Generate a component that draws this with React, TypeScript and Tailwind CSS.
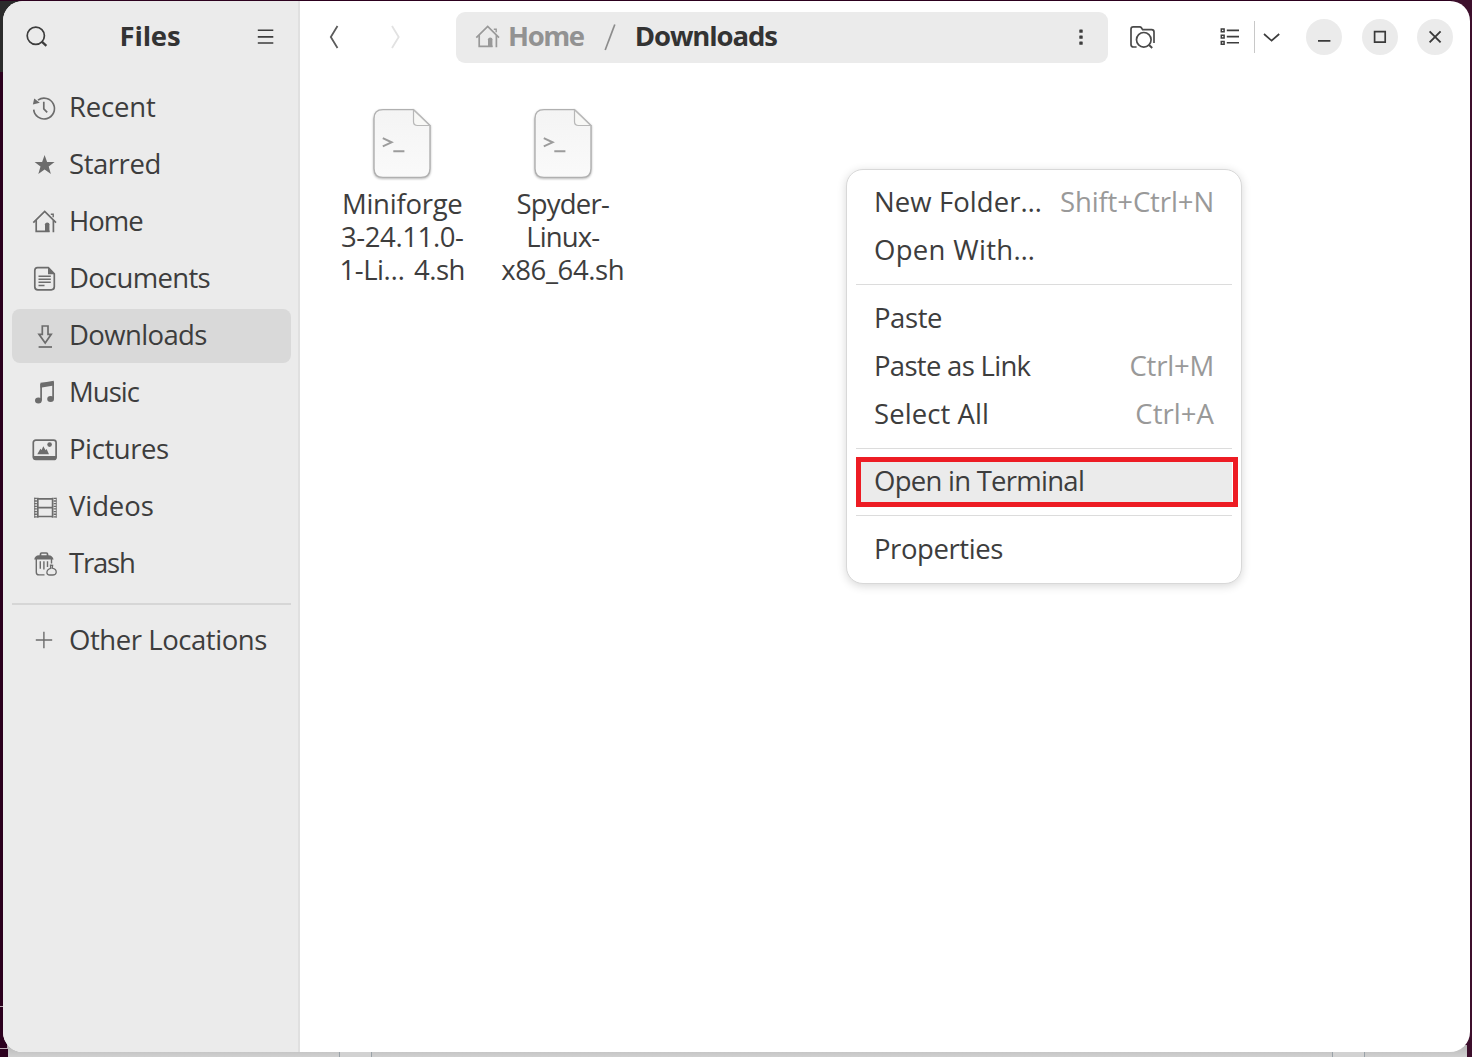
import type { ReactNode } from 'react';

type IconProps = { className?: string };

function Icon({ children, className = 'text-[#6c6c6c]' }: { children: ReactNode; className?: string }) {
  return (
    <svg width="28" height="28" viewBox="0 0 28 28" fill="none" stroke="currentColor" strokeWidth="1.7" className={`shrink-0 ${className}`}>
      {children}
    </svg>
  );
}

const RecentIcon = () => (
  <Icon>
    <path d="M8 6.1A10.4 10.4 0 1 1 3.7 15.6" />
    <path d="M2.9 10.6 4.2 4.4 9.8 8.8Z" fill="currentColor" stroke="none" />
    <path d="M13.8 7.8V14.8L17.2 18.4" />
  </Icon>
);

const StarIcon = () => (
  <Icon>
    <path d="M14.6 4 17.1 11H24.6L18.7 15.5 20.9 23 14.6 18.6 8.3 23 10.5 15.5 4.6 11H12.1Z" fill="currentColor" stroke="none" />
  </Icon>
);

const HomeIcon = ({ className }: IconProps) => (
  <Icon className={className}>
    <path d="M3.3 14.6 14.7 3.4 26 14.6" />
    <path d="M6.2 12V23.4H19.6M23.4 12.3V24.2" />
    <path d="M15 24V16.2Q15 14.4 17.2 14.4 19.4 14.4 19.4 16.2V24Z" fill="currentColor" stroke="none" />
    <path d="M20.8 6.3H23.2V9.2" strokeWidth="1.4" />
  </Icon>
);

const DocumentIcon = () => (
  <Icon>
    <path d="M7.5 2.7H18.3L24.3 8.8V21.8Q24.3 24.8 21.3 24.8H7.8Q4.8 24.8 4.8 21.8V5.5Q4.8 2.7 7.5 2.7Z" />
    <path d="M18 2.6V9.2H24.6Z" fill="currentColor" stroke="none" />
    <path d="M8.5 11.2H20.8M8.5 14.3H20.8M8.5 17.3H20.8M8.5 20.4H14.5" strokeWidth="1.5" />
  </Icon>
);

const DownloadIcon = () => (
  <Icon>
    <path d="M12.3 4H18V12.3H21.2L15.2 21 9 12.3H12.3Z" />
    <path d="M8.6 25H22" />
  </Icon>
);

const MusicIcon = () => (
  <Icon>
    <path d="M10.4 3.7Q16 3.4 23.8 1.8V6.6L10.4 8.8Z" fill="currentColor" stroke="none" />
    <path d="M11.1 5V21.5M23.1 3V19.8" />
    <ellipse cx="8.4" cy="21.6" rx="3.4" ry="3" fill="currentColor" stroke="none" />
    <ellipse cx="20.6" cy="20" rx="3.4" ry="3" fill="currentColor" stroke="none" />
  </Icon>
);

const PictureIcon = () => (
  <Icon>
    <rect x="3.3" y="4.1" width="22.8" height="19.4" rx="2.5" />
    <path d="M3 20H26.4V21.7Q26.4 24 24 24H5.4Q3 24 3 21.7Z" fill="currentColor" stroke="none" />
    <path d="M7.3 18.3 10.4 12.7 11.6 13.9 13.3 10.2 15.6 14.2 16.6 13 19 18.3Z" fill="currentColor" stroke="none" />
    <circle cx="19.6" cy="8.6" r="2.3" fill="currentColor" stroke="none" />
  </Icon>
);

const VideoIcon = () => (
  <Icon>
    <path d="M7.8 4.7V24.8M22.6 4.7V24.8M7.8 5.9H22.6M7.8 14.6H22.6M7.8 23.5H22.6" />
    <path d="M5.6 4.7V24.8M24.9 4.7V24.8" strokeWidth="2.6" strokeDasharray="1.3 1.35" />
    <path d="M4.7 4.7V24.8M26.3 4.7V24.8" strokeWidth="0.9" />
  </Icon>
);

const TrashIcon = () => (
  <Icon>
    <path d="M10.5 6V4.1Q10.5 3 11.6 3H16.4Q17.5 3 17.5 4.1V6" />
    <path d="M4.2 9.4Q4.8 5.5 9 5.3H18.6Q22.6 5.5 23.6 9.4Z" fill="currentColor" stroke="none" />
    <path d="M6.3 9V22.2Q6.3 24.9 9 24.9H14.5M21.5 9V13.5" strokeWidth="1.4" />
    <path d="M10.3 11.2V18.8M13.9 11.2V19.6M17.5 11.2V17" strokeWidth="1.4" />
    <path d="M20.5 15.2 22.6 15.3 22.2 18.2C25 18.7 26.4 20.6 26.2 22.5 26 24.3 24.5 25 22.6 25H19.8C17.8 25 16.8 23.9 16.9 22.3 17 20.3 18.5 18.8 20.6 18.3Z" strokeWidth="1.3" />
  </Icon>
);

const PlusIcon = () => (
  <Icon>
    <path d="M5.8 14H22.2M13.9 5.8V22.2" strokeWidth="1.4" />
  </Icon>
);

const places = [
  { icon: <RecentIcon />, label: 'Recent', tracking: 'tracking-[-0.2px]' },
  { icon: <StarIcon />, label: 'Starred', tracking: 'tracking-[-0.45px]' },
  { icon: <HomeIcon />, label: 'Home', tracking: 'tracking-[-1px]' },
  { icon: <DocumentIcon />, label: 'Documents', tracking: 'tracking-[-0.7px]' },
  { icon: <DownloadIcon />, label: 'Downloads', tracking: 'tracking-[-0.62px]', active: true },
  { icon: <MusicIcon />, label: 'Music', tracking: 'tracking-[-0.95px]' },
  { icon: <PictureIcon />, label: 'Pictures', tracking: 'tracking-[-0.42px]' },
  { icon: <VideoIcon />, label: 'Videos', tracking: 'tracking-[-0.1px]' },
  { icon: <TrashIcon />, label: 'Trash', tracking: 'tracking-[-1.2px]' },
];

type PlaceProps = { icon: ReactNode; label: string; tracking: string; active?: boolean };

function Place({ icon, label, tracking, active }: PlaceProps) {
  return (
    <div className={`flex h-[54px] items-center gap-[11px] rounded-lg pl-[18px] ${active ? 'bg-[#d9d9d9]' : ''}`}>
      {icon}
      <span className={`whitespace-nowrap pb-[2px] ${tracking}`}>{label}</span>
    </div>
  );
}

function Sidebar() {
  return (
    <aside className="flex w-[297px] shrink-0 flex-col border-r-2 border-[#e0e0e0] bg-[#ebebeb] pl-[9px] pr-[7px]">
      <header className="flex h-[71px] items-center justify-between pl-3.5 pr-3.5">
        <svg width="24" height="24" viewBox="0 0 24 24" fill="none" stroke="#3d3d3d" strokeWidth="1.7">
          <circle cx="9.8" cy="10.7" r="8.6" />
          <path d="M15.8 16.7 20.4 20.9" strokeWidth="2.3" />
        </svg>
        <h1 className="pb-0.5 pr-[3px] font-bold tracking-[-0.2px] text-[#333333]">Files</h1>
        <svg width="24" height="24" viewBox="0 0 24 24" stroke="#3d3d3d" strokeWidth="1.6">
          <path d="M4.8 5.2H20.3M4.8 11.9H20.3M4.8 18H20.3" />
        </svg>
      </header>
      <nav className="flex flex-col gap-[3px] pt-[9px] [&_span]:pb-1">
        {places.map((p) => (
          <Place key={p.label} {...p} />
        ))}
      </nav>
      <div className="mb-2 mt-3 h-0.5 bg-[#d6d6d6]" />
      <Place icon={<PlusIcon />} label="Other Locations" tracking="tracking-[-0.44px]" />
    </aside>
  );
}

function Toolbar() {
  return (
    <header className="flex h-[71px] items-center">
      <svg width="90" height="28" viewBox="0 0 90 28" fill="none" strokeWidth="1.8" className="ml-[22px] shrink-0">
        <path d="M15.5 3 8.8 14 15.5 25" stroke="#5c5c5c" />
        <path d="M70 3 76.7 14 70 25" stroke="#e2e2e2" />
      </svg>
      <div className="ml-11 mt-px flex h-[51px] w-[652px] shrink-0 items-center rounded-[9px] bg-[#ebebeb] pb-px pl-[17px] pr-3.5">
        <HomeIcon className="text-[#999999]" />
        <span className="ml-[7px] pb-[3px] font-bold tracking-[-1.4px] text-[#929292]">Home</span>
        <svg width="14" height="28" viewBox="0 0 14 28" stroke="#8c8c8c" strokeWidth="1.7" className="ml-[19px]">
          <path d="M11.8 1.5 2.2 27" />
        </svg>
        <span className="ml-[18px] pb-[3px] font-bold tracking-[-1.1px] text-[#333333]">Downloads</span>
        <svg width="26" height="28" viewBox="0 0 26 28" fill="#3d3d3d" className="ml-auto">
          <rect x="11.3" y="6.4" width="3.4" height="3.4" rx="0.6" />
          <rect x="11.3" y="12.4" width="3.4" height="3.4" rx="0.6" />
          <rect x="11.3" y="18.4" width="3.4" height="3.4" rx="0.6" />
        </svg>
      </div>
      <svg width="28" height="28" viewBox="0 0 28 28" fill="none" stroke="#4a4a4a" strokeWidth="1.7" className="ml-5 shrink-0">
        <path d="M8.6 24H5.6Q3 24 3 21.4V6.2Q3 3.9 5.3 3.9H11.6Q12.8 3.9 13.4 4.8L14.6 6.6H23.6Q26 6.6 26 9V20" />
        <circle cx="15.8" cy="16.8" r="7.3" />
        <path d="M20.8 21.8 24.2 25" strokeWidth="2" />
      </svg>
      <svg width="24" height="24" viewBox="0 0 24 24" fill="none" stroke="#3d3d3d" strokeWidth="1.5" className="ml-[62px] shrink-0">
        <path d="M3.3 4H6.1V6.8H3.3ZM3.3 10.2H6.1V13H3.3ZM3.3 16.4H6.1V19.2H3.3Z" />
        <path d="M8.8 5.4H21M8.8 11.6H21M8.8 17.8H21" strokeWidth="1.6" />
      </svg>
      <div className="ml-3 h-8 w-px bg-[#c8c8c8]" />
      <svg width="20" height="20" viewBox="0 0 20 20" fill="none" stroke="#3d3d3d" strokeWidth="1.7" className="ml-[7px] shrink-0">
        <path d="M2 7 9.6 13.7 17.2 7" />
      </svg>
      <div className="ml-6 flex gap-[19.5px] pt-px">
        <WindowButton><path d="M12 21.9H24.4" /></WindowButton>
        <WindowButton><path d="M12.6 12.6H23.2V23.2H12.6Z" /></WindowButton>
        <WindowButton><path d="M12.6 12.4 23.6 23.4M23.6 12.4 12.6 23.4" strokeWidth="1.9" /></WindowButton>
      </div>
    </header>
  );
}

function WindowButton({ children }: { children: ReactNode }) {
  return (
    <button className="size-9 rounded-full bg-[#ebebeb]">
      <svg width="36" height="36" viewBox="0 0 36 36" fill="none" stroke="#3a3a3a" strokeWidth="1.7">
        {children}
      </svg>
    </button>
  );
}

function ScriptFileIcon({ id }: { id: string }) {
  return (
    <svg width="64" height="76" viewBox="0 0 64 76" fill="none" className="drop-shadow-[0_1px_1px_rgba(0,0,0,0.28)]">
      <defs>
        <linearGradient id={id} x1="0" y1="0" x2="0" y2="1">
          <stop offset="0" stopColor="#f4f4f4" />
          <stop offset="1" stopColor="#fafafa" />
        </linearGradient>
      </defs>
      <path d="M13 2.6H43.5L60 18.5V61.5Q60 70.4 51 70.4H13Q4 70.4 4 61.5V11.6Q4 2.6 13 2.6Z" fill={`url(#${id})`} stroke="#b0b0b0" strokeWidth="1.4" />
      <path d="M43.5 2.8V14.5Q43.5 18.5 47.5 18.5H59.8Z" fill="#f8f8f6" stroke="#b8b8b8" strokeWidth="1.2" />
      <path d="M12.8 31.2 21.6 35.3 12.8 39.4M23.3 44.3H34.4" stroke="#9c9c9c" strokeWidth="2" />
    </svg>
  );
}

const files = [
  {
    id: 'miniforge',
    lines: [
      { text: 'Miniforge', tracking: 'tracking-[-0.25px]' },
      { text: '3-24.11.0-', tracking: 'tracking-[-0.4px]' },
      { text: '1-Li… 4.sh', tracking: 'tracking-[-0.5px] [word-spacing:3px]' },
    ],
  },
  {
    id: 'spyder',
    lines: [
      { text: 'Spyder-', tracking: 'tracking-[-0.78px]' },
      { text: 'Linux-', tracking: 'tracking-[-0.88px]' },
      { text: 'x86_64.sh', tracking: 'tracking-[-0.4px]' },
    ],
  },
];

function MenuItem({ label, shortcut, tracking, keyTracking = '' }: { label: string; shortcut?: string; tracking: string; keyTracking?: string }) {
  return (
    <div className="flex h-12 items-center justify-between whitespace-nowrap pb-px pl-[18px] pr-[18px]">
      <span className={tracking}>{label}</span>
      {shortcut && <span className={`text-[#999999] ${keyTracking}`}>{shortcut}</span>}
    </div>
  );
}

const Separator = ({ className = 'mb-[9px]' }: { className?: string }) => <div className={`mt-2.5 h-px bg-[#dcdcdc] ${className}`} />;

function ContextMenu() {
  return (
    <div className="absolute left-[546px] top-[168px] flex h-[415px] w-[396px] flex-col rounded-[17px] border border-[#d8d8d8] bg-white px-[9px] pt-2 shadow-[0_2px_10px_rgba(0,0,0,0.16)]">
      <MenuItem label="New Folder…" shortcut="Shift+Ctrl+N" tracking="tracking-[0.07px]" keyTracking="tracking-[-0.11px]" />
      <MenuItem label="Open With…" tracking="tracking-[0.31px]" />
      <Separator />
      <MenuItem label="Paste" tracking="tracking-[-0.43px]" />
      <MenuItem label="Paste as Link" shortcut="Ctrl+M" tracking="tracking-[-0.7px]" keyTracking="tracking-[-0.21px]" />
      <MenuItem label="Select All" shortcut="Ctrl+A" tracking="tracking-[0.08px]" keyTracking="tracking-[0.05px]" />
      <Separator className="mb-2" />
      <div className="relative">
        <div className="bg-[#ebebeb]">
          <MenuItem label="Open in Terminal" tracking="tracking-[-0.74px]" />
        </div>
        <div className="absolute -bottom-0.5 -right-1.5 left-0 top-0 border-[5px] border-[#ed1c24]" />
      </div>
      <Separator />
      <MenuItem label="Properties" tracking="tracking-[-0.42px]" />
    </div>
  );
}

export default function App() {
  return (
    <div className="relative h-[1057px] w-[1472px] overflow-hidden bg-[#2c001e] pl-[3px] pt-px font-['Open_Sans',sans-serif] text-[27.5px] leading-[33px] text-[#3d3d3d]">
      <div className="absolute left-0 top-0 h-[72px] w-5 bg-[#2b2b2b]" />
      <div className="absolute left-0 top-0 h-px w-full bg-[#2c001e]" />
      <div className="absolute right-0 top-0 h-full w-5 bg-[#3d0f2c]" />
      <div className="absolute -left-1 top-[1006px] h-[43px] w-3 border border-[#b9a8b2]" />
      <div className="absolute bottom-0 left-2 flex h-3 w-[1459px] bg-gradient-to-b from-[#b8b8b8] to-[#d0d0d0]">
        <div className="ml-[331px] w-[33px] border-x border-[#9aa2a8] bg-[#d2d2d2]" />
        <div className="ml-[960px] w-[33px] border-x border-[#9aa2a8] bg-[#d2d2d2]" />
      </div>
      <div className="relative flex h-[1051px] w-[1467px] overflow-hidden rounded-[20px] bg-white">
        <Sidebar />
        <main className="relative flex-1">
          <Toolbar />
          <div className="flex pl-[22px] pt-[35px]">
            {files.map((f) => (
              <div key={f.id} className="flex w-[160.5px] flex-col items-center">
                <ScriptFileIcon id={f.id} />
                <div className="pt-1 text-center">
                  {f.lines.map((l) => (
                    <div key={l.text} className={`whitespace-nowrap ${l.tracking}`}>{l.text}</div>
                  ))}
                </div>
              </div>
            ))}
          </div>
          <ContextMenu />
        </main>
      </div>
    </div>
  );
}
